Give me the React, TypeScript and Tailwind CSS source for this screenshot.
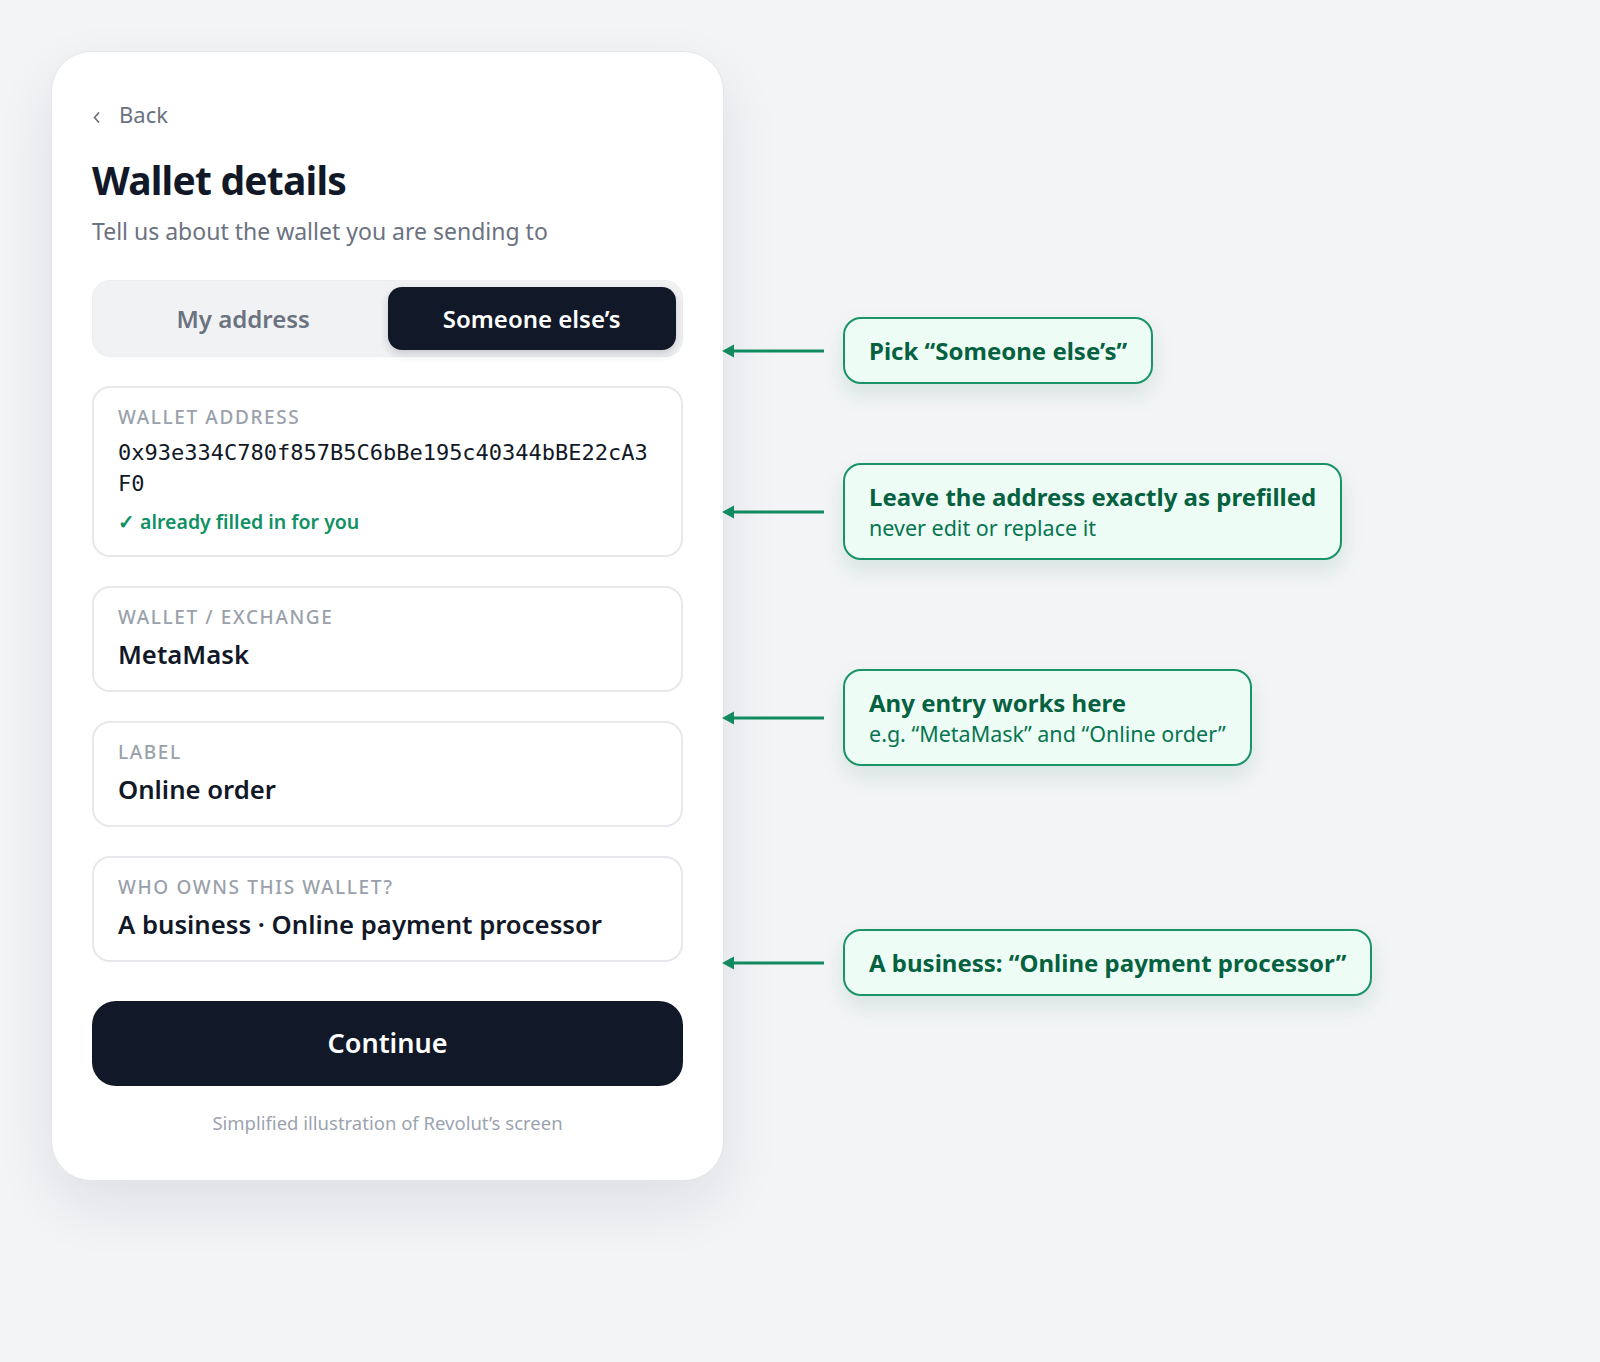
import React from "react";

const font = { fontFamily: '"Noto Sans", "Open Sans", sans-serif' };

function Arrow() {
  return (
    <svg width="102" height="16" viewBox="0 0 102 16" className="shrink-0">
      <line x1="9" y1="8" x2="102" y2="8" stroke="#118a5f" strokeWidth="3" />
      <polygon points="0,8 12,1.5 12,14.5" fill="#118a5f" />
    </svg>
  );
}

function Callout({ title, sub }: { title: string; sub?: string }) {
  return (
    <div className="flex items-center gap-[19px]">
      <Arrow />
      <div className="w-fit rounded-[18px] border-2 border-[#1a9467] bg-[#edfdf6] px-6 py-[15px] shadow-[0_10px_22px_rgba(16,120,85,0.13)]">
        <div className="text-[24px] font-bold leading-[33px] text-[#05613f]">{title}</div>
        {sub && <div className="text-[21.5px] leading-[30px] text-[#067550]">{sub}</div>}
      </div>
    </div>
  );
}

function Field({ label, value }: { label: string; value: string }) {
  return (
    <div className="rounded-[18px] border-2 border-[#e6e8ec] bg-white px-[24px] pt-[17px] pb-[18px]">
      <div className="text-[19px] font-medium uppercase leading-[24px] tracking-[0.085em] text-[#9aa1ab]">{label}</div>
      <div className="mt-[9px] text-[25.7px] font-semibold leading-[34px] text-[#111827]">{value}</div>
    </div>
  );
}

export default function App() {
  return (
    <div className="min-h-[1362px] w-full bg-[#f3f4f6]" style={font}>
      <div className="flex items-start pl-[51px] pt-[51px]">
        <div className="w-[673px] shrink-0 rounded-[40px] border border-[#e4e6ea] bg-white px-10 pt-[46px] pb-[44px] shadow-[0_24px_60px_rgba(17,24,39,0.09)]">
          <div className="flex items-center text-[22px] leading-[33px] text-[#6b7280]">
            <svg width="10" height="12" viewBox="0 0 10 12" className="mt-[5px]">
              <path d="M6.5 2 L2.5 6.5 L6.5 11" fill="none" stroke="#6b7280" strokeWidth="1.8" strokeLinecap="round" strokeLinejoin="round" />
            </svg>
            <span className="ml-[17px]">Back</span>
          </div>
          <h1 className="mt-[26px] text-[39px] font-bold leading-[46px] tracking-[-0.02em] text-[#111827]">Wallet details</h1>
          <p className="mt-[12px] text-[23px] leading-[33px] text-[#6b7280]">Tell us about the wallet you are sending to</p>

          <div className="mt-[32px] grid h-[77px] grid-cols-2 rounded-[18px] border border-[#eceef1] bg-[#f1f2f4] p-[6px]">
            <div className="flex items-center justify-center text-[24px] font-semibold text-[#6b7280]">My address</div>
            <div className="flex items-center justify-center rounded-[14px] bg-[#111827] text-[24px] font-semibold text-white shadow-[0_4px_10px_rgba(17,24,39,0.18)]">
              Someone else’s
            </div>
          </div>

          <div className="mt-[29px] flex flex-col gap-[29px]">
            <div className="rounded-[18px] border-2 border-[#e6e8ec] bg-white px-[24px] pt-[17px] pb-[19px]">
              <div className="text-[19px] font-medium uppercase leading-[24px] tracking-[0.085em] text-[#9aa1ab]">Wallet address</div>
              <div
                className="mt-[8px] break-all text-[22px] leading-[31px] text-[#111827]"
                style={{ fontFamily: '"DejaVu Sans Mono", "Liberation Mono", monospace' }}
              >
                0x93e334C780f857B5C6bBe195c40344bBE22cA3F0
              </div>
              <div className="mt-[9px] text-[19.5px] font-semibold leading-[28px] text-[#0f9163]">✓ already filled in for you</div>
            </div>
            <Field label="Wallet / Exchange" value="MetaMask" />
            <Field label="Label" value="Online order" />
            <Field label="Who owns this wallet?" value="A business · Online payment processor" />
          </div>

          <button className="mt-[39px] flex h-[85px] w-full items-center justify-center rounded-[24px] bg-[#111827] text-[27px] font-semibold text-white">
            Continue
          </button>
          <p className="mt-[24px] text-center text-[18.5px] leading-[26px] text-[#9ca3af]">Simplified illustration of Revolut’s screen</p>
        </div>

        <div className="-ml-[2px] mt-[266px] flex flex-col">
          <Callout title="Pick “Someone else’s”" />
          <div className="mt-[79px]">
            <Callout title="Leave the address exactly as prefilled" sub="never edit or replace it" />
          </div>
          <div className="mt-[109px]">
            <Callout title="Any entry works here" sub="e.g. “MetaMask” and “Online order”" />
          </div>
          <div className="mt-[163px]">
            <Callout title="A business: “Online payment processor”" />
          </div>
        </div>
      </div>
    </div>
  );
}
